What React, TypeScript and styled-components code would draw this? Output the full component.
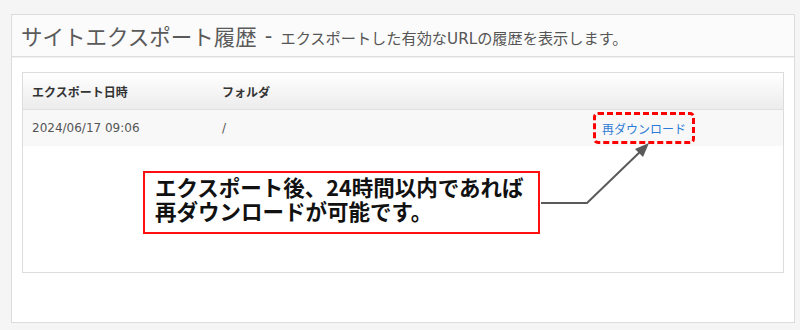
import React from "react";
import styled, { createGlobalStyle } from "styled-components";

const FONT = `"DejaVu Sans", "Noto Sans CJK JP", sans-serif`;

const GlobalStyle = createGlobalStyle`
  html, body {
    margin: 0;
    padding: 0;
    background: #f5f5f5;
    font-family: ${FONT};
  }
`;

type ExportRecord = {
  date: string;
  folder: string;
};

const records: ExportRecord[] = [{ date: "2024/06/17 09:06", folder: "/" }];

function App() {
  return (
    <>
      <GlobalStyle />
      <StyledPage>
        <StyledPanel>
          <StyledPanelHeader>
            <StyledTitle>サイトエクスポート履歴</StyledTitle>
            <StyledDash>-</StyledDash>
            <StyledSubtitle>
              エクスポートした有効なURLの履歴を表示します。
            </StyledSubtitle>
          </StyledPanelHeader>
          <StyledPanelBody>
            <StyledTable>
              <StyledHeadRow>
                <span>エクスポート日時</span>
                <span>フォルダ</span>
                <span />
              </StyledHeadRow>
              {records.map((record) => (
                <StyledRow key={record.date}>
                  <span>{record.date}</span>
                  <span>{record.folder}</span>
                  <StyledLink href="#">再ダウンロード</StyledLink>
                </StyledRow>
              ))}

              <StyledHighlight />
              <StyledArrow viewBox="0 0 761 201">
                <polyline
                  points="518,130 564,130 621,75"
                  fill="none"
                  stroke="#5a5a5a"
                  strokeWidth="2"
                />
                <polygon points="626,70 612,76 620,84" fill="#5a5a5a" />
              </StyledArrow>
              <StyledCallout>
                <div>エクスポート後、24時間以内であれば</div>
                <div>再ダウンロードが可能です。</div>
              </StyledCallout>
            </StyledTable>
          </StyledPanelBody>
        </StyledPanel>
      </StyledPage>
    </>
  );
}

const StyledPage = styled.div`
  padding: 14px 5px 7px 11px;
`;

const StyledPanel = styled.div`
  height: 309px;
  box-sizing: border-box;
  border: 1px solid #dcdcdc;
  background: #fff;
`;

const StyledPanelHeader = styled.div`
  height: 41px;
  display: flex;
  align-items: center;
  padding-left: 9px;
  background: #fbfbfb;
  border-bottom: 1px solid #dedede;
  box-shadow: 0 1px 0 #f0f0f0;
  color: #555;
  white-space: nowrap;
`;

const StyledTitle = styled.span`
  font-size: 21.5px;
  color: #5a5a5a;
`;

const StyledDash = styled.span`
  font-size: 21px;
  margin: 0 8px 0 8px;
  color: #555;
`;

const StyledSubtitle = styled.span`
  font-size: 15.2px;
  color: #555;
  padding-top: 3px;
`;

const StyledPanelBody = styled.div`
  padding: 15px 10px 0 10px;
`;

const StyledTable = styled.div`
  position: relative;
  height: 201px;
  box-sizing: border-box;
  border: 1px solid #dcdcdc;
  background: #fff;
`;

const StyledHeadRow = styled.div`
  display: grid;
  grid-template-columns: 190px 380px 1fr;
  align-items: center;
  height: 36px;
  padding-left: 9px;
  background: linear-gradient(#ffffff, #ececec);
  border-bottom: 1px solid #e0e0e0;
  font-size: 12px;
  font-weight: bold;
  color: #333;
`;

const StyledRow = styled.div`
  display: grid;
  grid-template-columns: 190px 380px 1fr;
  align-items: center;
  height: 36px;
  padding-left: 9px;
  background: #f8f8f8;
  font-size: 12px;
  color: #555;
`;

const StyledLink = styled.a`
  color: #2b7bd6;
  text-decoration: none;
  font-size: 12px;
`;

const StyledHighlight = styled.div`
  position: absolute;
  left: 570px;
  top: 39px;
  width: 102px;
  height: 32px;
  box-sizing: border-box;
  border: 3px dashed #ff0000;
  border-radius: 5px;
`;

const StyledArrow = styled.svg`
  position: absolute;
  inset: 0;
  width: 761px;
  height: 201px;
  pointer-events: none;
`;

const StyledCallout = styled.div`
  position: absolute;
  left: 120px;
  top: 98px;
  width: 397px;
  height: 63px;
  box-sizing: border-box;
  padding: 2px 0 0 10px;
  border: 2px solid #ff1010;
  background: #fff;
  font-family: "Noto Sans CJK JP", sans-serif;
  font-size: 21.5px;
  font-weight: bold;
  line-height: 24px;
  color: #111;
  white-space: nowrap;
`;

export default App;
